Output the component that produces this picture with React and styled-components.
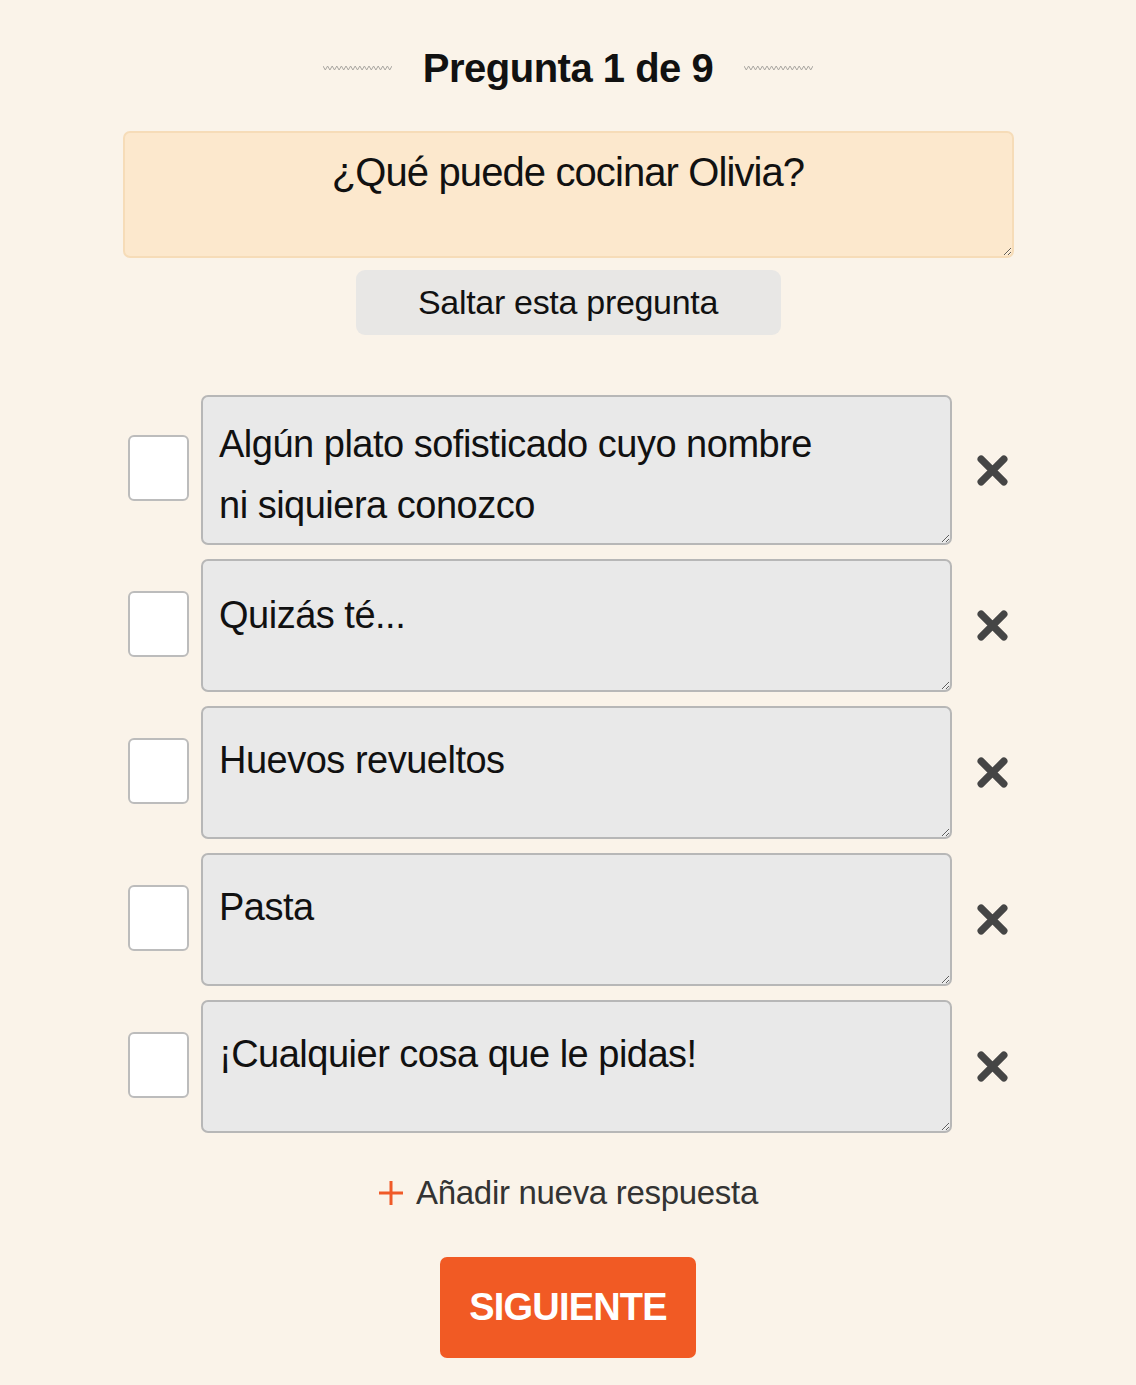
import React from "react";
import styled, { createGlobalStyle } from "styled-components";

const Global = createGlobalStyle`
  html, body { margin: 0; padding: 0; background: #faf3e9; }
  body { font-family: "Liberation Sans", Arial, sans-serif; color: #111; }
`;

const Page = styled.main`
  min-height: 1385px;
  box-sizing: border-box;
  padding-top: 45px;
  display: flex;
  flex-direction: column;
  align-items: center;
`;

const TitleRow = styled.div`
  display: flex;
  align-items: center;
  gap: 31px;
  height: 46px;
`;

const Title = styled.h1`
  margin: 0;
  font-size: 40px;
  line-height: 46px;
  font-weight: 700;
  letter-spacing: -0.5px;
  color: #111;
`;

const Wave = () => (
  <svg width="69" height="6" viewBox="0 0 69 6">
    <polyline
      fill="none"
      stroke="#aaa7a2"
      strokeWidth="1"
      points={Array.from({ length: 31 }, (_, i) => `${i * 2.3},${i % 2 ? 5 : 1}`).join(" ")}
    />
  </svg>
);

const QuestionBox = styled.textarea`
  margin-top: 40px;
  width: 891px;
  height: 127px;
  box-sizing: border-box;
  padding: 16px 20px 8px;
  background: #fce8cd;
  border: 2px solid #f6dcb8;
  border-radius: 7px;
  font-family: "Liberation Sans", Arial, sans-serif;
  font-size: 40px;
  letter-spacing: -0.9px;
  line-height: 46px;
  color: #111;
  text-align: center;
  resize: vertical;
  outline: none;
  overflow: hidden;
`;

const SkipButton = styled.button`
  margin-top: 12px;
  width: 425px;
  height: 65px;
  border: none;
  border-radius: 9px;
  background: #e8e7e5;
  font-family: "Liberation Sans", Arial, sans-serif;
  font-size: 34px;
  letter-spacing: -0.3px;
  color: #111;
  cursor: pointer;
`;

const List = styled.div`
  margin-top: 60px;
  display: flex;
  flex-direction: column;
  gap: 14px;
`;

const Row = styled.div`
  display: flex;
  align-items: center;
`;

const Check = styled.input.attrs({ type: "checkbox" })`
  appearance: none;
  margin: 0 12px 4px 0;
  width: 61px;
  height: 66px;
  box-sizing: border-box;
  background: #fff;
  border: 2px solid #bcbcbc;
  border-radius: 6px;
  cursor: pointer;
`;

const Answer = styled.textarea`
  width: 751px;
  height: ${(p) => p.$h}px;
  box-sizing: border-box;
  padding: ${(p) => p.$pt}px 16px 0;
  background: #e9e9e9;
  border: 2px solid #b7b7b7;
  border-radius: 7px;
  font-family: "Liberation Sans", Arial, sans-serif;
  font-size: 38px;
  letter-spacing: -0.5px;
  line-height: 61px;
  color: #111;
  resize: vertical;
  outline: none;
  overflow: hidden;
`;

const RemoveButton = styled.button`
  margin-left: 24px;
  width: 32px;
  height: 32px;
  padding: 0;
  border: none;
  background: none;
  display: flex;
  align-items: center;
  justify-content: center;
  cursor: pointer;
`;

const XIcon = () => (
  <svg width="31" height="31" viewBox="0 0 30 30">
    <path d="M4 4 L26 26 M26 4 L4 26" stroke="#454545" strokeWidth="7" strokeLinecap="round" />
  </svg>
);

const AddLink = styled.button`
  margin-top: 40px;
  border: none;
  background: none;
  display: flex;
  align-items: center;
  gap: 12px;
  font-family: "Liberation Sans", Arial, sans-serif;
  font-size: 33px;
  letter-spacing: -0.3px;
  line-height: 40px;
  color: #333;
  cursor: pointer;
  padding: 0;
`;

const PlusIcon = () => (
  <svg width="26" height="26" viewBox="0 0 26 26">
    <path d="M13 1 V25 M1 13 H25" stroke="#f05a28" strokeWidth="3" />
  </svg>
);

const NextButton = styled.button`
  margin-top: 44px;
  width: 256px;
  height: 101px;
  border: none;
  border-radius: 7px;
  background: #f15a24;
  color: #fff;
  font-family: "Liberation Sans", Arial, sans-serif;
  font-size: 38px;
  letter-spacing: -0.8px;
  font-weight: 700;
  cursor: pointer;
`;

const answers = [
  { text: "Algún plato sofisticado cuyo nombre\nni siquiera conozco", h: 150, pt: 17 },
  { text: "Quizás té...", h: 133, pt: 24 },
  { text: "Huevos revueltos", h: 133, pt: 22 },
  { text: "Pasta", h: 133, pt: 22 },
  { text: "¡Cualquier cosa que le pidas!", h: 133, pt: 22 },
];

export default function App() {
  return (
    <>
      <Global />
      <Page>
        <TitleRow>
          <Wave />
          <Title>Pregunta 1 de 9</Title>
          <Wave />
        </TitleRow>
        <QuestionBox defaultValue="¿Qué puede cocinar Olivia?" />
        <SkipButton>Saltar esta pregunta</SkipButton>
        <List>
          {answers.map((a, i) => (
            <Row key={i}>
              <Check />
              <Answer defaultValue={a.text} $h={a.h} $pt={a.pt} />
              <RemoveButton aria-label="Eliminar">
                <XIcon />
              </RemoveButton>
            </Row>
          ))}
        </List>
        <AddLink>
          <PlusIcon />
          Añadir nueva respuesta
        </AddLink>
        <NextButton>SIGUIENTE</NextButton>
      </Page>
    </>
  );
}
